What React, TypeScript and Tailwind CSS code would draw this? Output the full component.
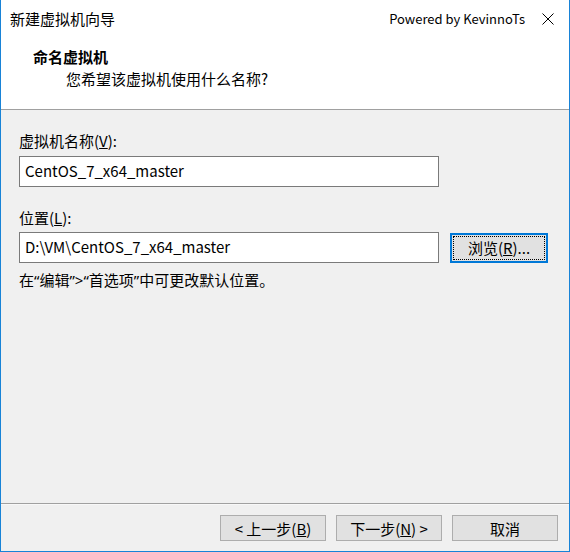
import React from "react";

const font = { fontFamily: '"Noto Sans CJK SC", "Noto Sans", sans-serif' };
const latin = { fontFamily: '"Noto Sans", "Liberation Sans", sans-serif' };

function Btn({ children, className = "" }: { children: React.ReactNode; className?: string }) {
  return (
    <div
      className={
        "w-[106px] h-[26px] border border-[#adadad] bg-[#e1e1e1] flex items-center justify-center text-[15px] leading-none text-black " +
        className
      }
    >
      {children}
    </div>
  );
}

export default function App() {
  return (
    <div
      className="w-[570px] h-[552px] bg-[#f0f0f0] border-l border-r border-b border-[#1883d7] flex flex-col text-black"
      style={font}
    >
      {/* Header */}
      <div className="h-[110px] bg-white border-b border-[#a0a0a0] flex flex-col shrink-0">
        <div className="h-[38px] flex items-center pl-[9px] pr-[15px]">
          <div className="text-[15px] leading-[20px]">新建虚拟机向导</div>
          <div className="flex-1" />
          <div className="text-[13px] leading-[20px]">Powered by KevinnoTs</div>
          <svg width="12" height="12" viewBox="0 0 12 12" className="ml-[17px]">
            <path d="M0.5 0.5 L11.5 11.5 M11.5 0.5 L0.5 11.5" stroke="#000" strokeWidth="1" fill="none" />
          </svg>
        </div>
        <div className="pl-[32px] mt-[9px] text-[15px] leading-[20px] font-bold">命名虚拟机</div>
        <div className="pl-[65px] mt-[2px] text-[15px] leading-[20px]">您希望该虚拟机使用什么名称?</div>
      </div>

      {/* Body */}
      <div className="flex-1 flex flex-col pl-[18px]">
        <div className="mt-[21px] text-[15px] leading-[20px]">
          虚拟机名称(<span className="underline">V</span>):
        </div>
        <div className="mt-[5px] w-[420px] h-[31px] bg-white border border-[#7a7a7a] flex items-center pl-[5px] text-[15px]">
          CentOS_7_x64_master
        </div>
        <div className="mt-[21px] text-[15px] leading-[20px]">
          位置(<span className="underline">L</span>):
        </div>
        <div className="mt-[4px] flex items-center">
          <div className="w-[420px] h-[31px] bg-white border border-[#7a7a7a] flex items-center pl-[5px] text-[15px]">
            D:\VM\CentOS_7_x64_master
          </div>
          <div className="ml-[11px] w-[98px] h-[30px] border-2 border-[#0078d7] bg-[#e1e1e1] p-[1px]">
            <div className="w-full h-full border border-dotted border-black flex items-center justify-center text-[15px] leading-none">
              浏览(<span className="underline">R</span>)...
            </div>
          </div>
        </div>
        <div className="mt-[7px] text-[15px] leading-[20px]">
          在<span style={latin}>“</span>编辑<span style={latin}>”&gt;“</span>首选项<span style={latin}>”</span>中可更改默认位置。
        </div>
      </div>

      {/* Footer */}
      <div className="h-[48px] shrink-0 border-t border-[#a0a0a0] flex flex-col">
        <div className="h-px bg-[#f8f8f8]" />
        <div className="flex justify-end gap-[10px] pr-[11px] pt-[10px]">
          <Btn>
            &lt; 上一步(<span className="underline">B</span>)
          </Btn>
          <Btn>
            下一步(<span className="underline">N</span>) &gt;
          </Btn>
          <Btn>取消</Btn>
        </div>
      </div>
    </div>
  );
}
